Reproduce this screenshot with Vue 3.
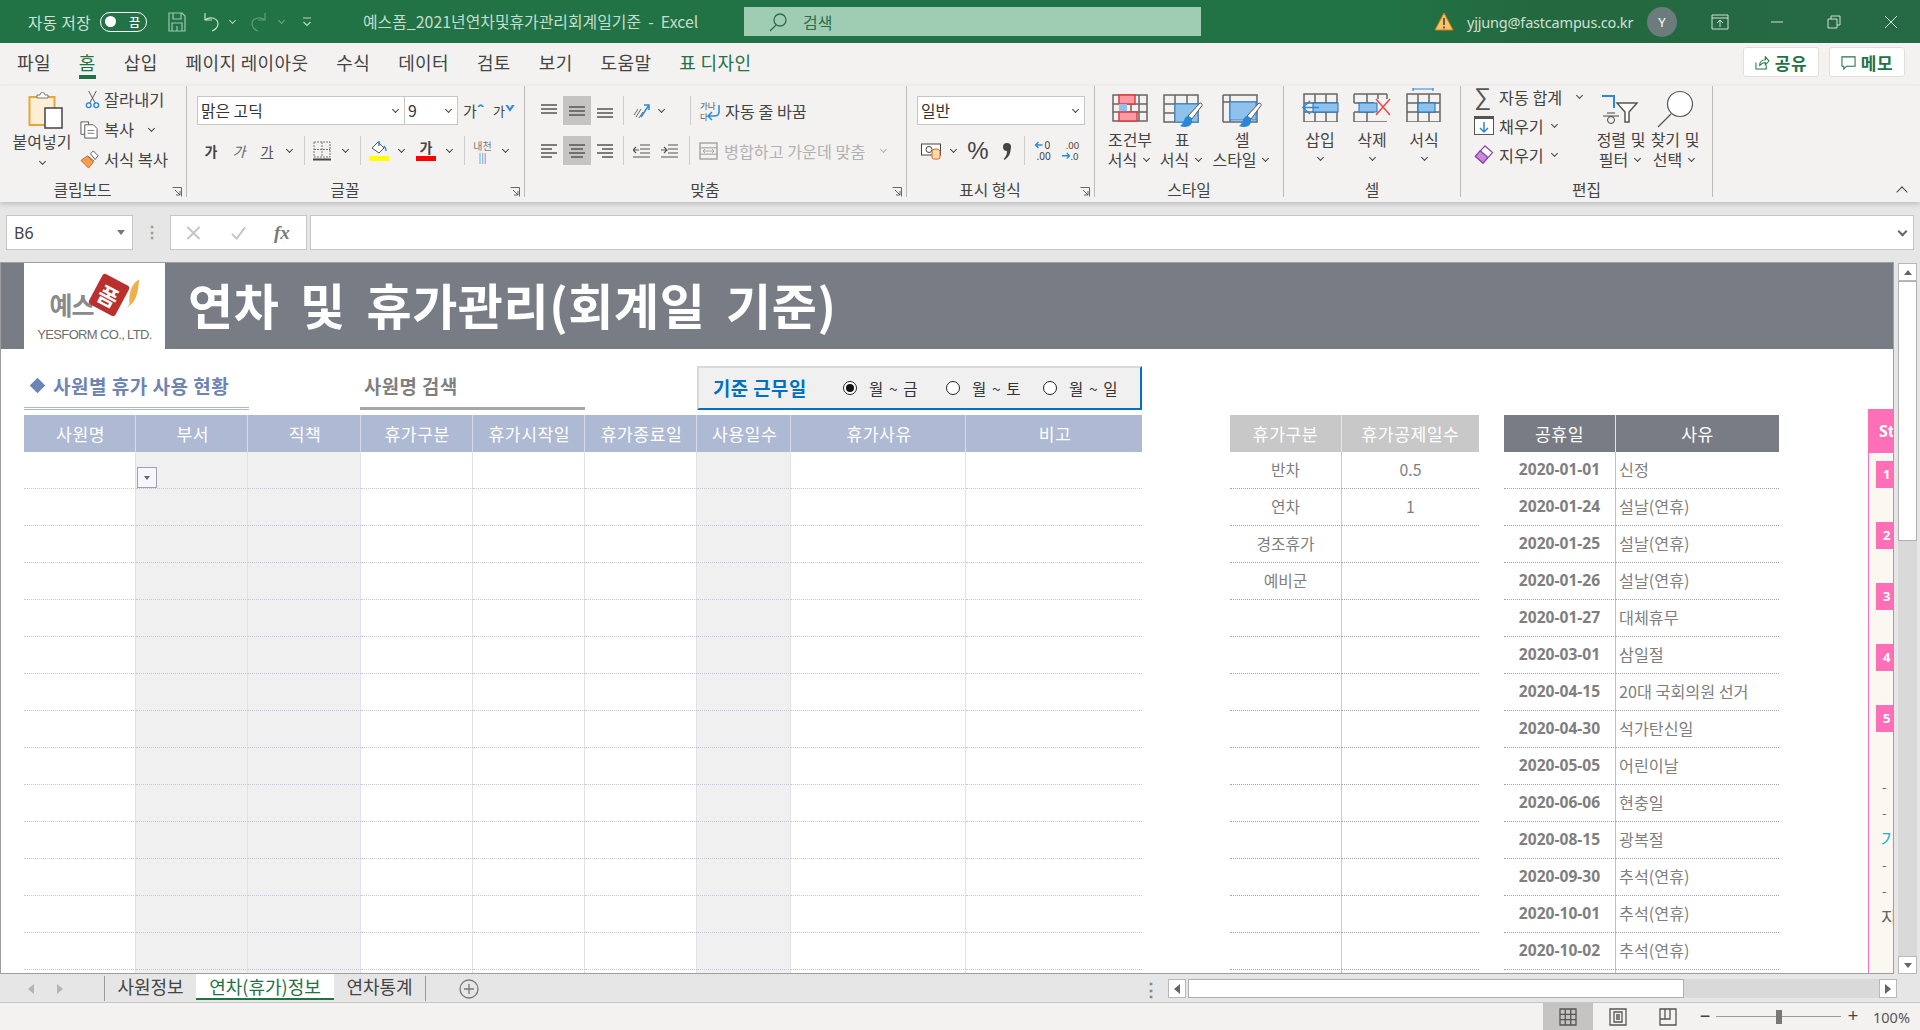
<template>
  <div class="app">
    <!-- title bar -->
    <header class="titlebar">
      <span class="autosave">자동 저장</span>
      <span class="toggle"><i></i><b>끔</b></span>
      <svg class="qa save" viewBox="0 0 18 20"><path d="M1 1h13l3 3v15H1zM5 1v6h8V1M4 19v-8h10v8M9 14v5" /></svg>
      <svg class="qa undo" viewBox="0 0 18 20"><path d="M3 1v7h7M3 8c5-4 13-2 13 4 0 3-3 6-6 7" /></svg>
      <i class="chev light undo-c"></i>
      <svg class="qa redo" viewBox="0 0 18 20"><path d="M15 1v7H8M15 8C10 4 2 6 2 12c0 3 3 6 6 7" /></svg>
      <i class="chev faint redo-c"></i>
      <svg class="qa more" viewBox="0 0 10 10"><path d="M1 1h8M1.5 5L5 8.5 8.5 5" /></svg>
      <span class="doc">예스폼_2021년연차및휴가관리회계일기준 &nbsp;-&nbsp; Excel</span>
      <div class="search">
        <svg viewBox="0 0 20 20"><circle cx="12" cy="8" r="6" /><path d="M8 13l-6 6" /></svg>
        <span>검색</span>
      </div>
      <svg class="warn" viewBox="0 0 20 20"><path d="M10 1L19 18H1z" fill="#f7c46c" stroke="#d97a12" /><path d="M10 6v7M10 14.5v2" stroke="#444" stroke-width="1.6" /></svg>
      <span class="user">yjjung@fastcampus.co.kr</span>
      <span class="avatar">Y</span>
      <svg class="win ribbon-opt" viewBox="0 0 18 16"><path d="M1 1h16v14H1zM1 4h16M9 13V7M6 9l3-3 3 3" /></svg>
      <svg class="win min" viewBox="0 0 14 14"><path d="M1 7h12" /></svg>
      <svg class="win restore" viewBox="0 0 14 14"><path d="M1 4h9v9H1zM4 4V1h9v9h-3" /></svg>
      <svg class="win close" viewBox="0 0 14 14"><path d="M1 1l12 12M13 1L1 13" /></svg>
    </header>

    <!-- ribbon tabs -->
    <nav class="tabs">
      <span v-for="t in ribbonTabs" :key="t" class="tab" :class="{ on: t === '홈' }">{{ t }}</span>
      <span class="tab design">표 디자인</span>
      <div class="actions">
        <button class="act">
          <svg viewBox="0 0 16 16"><path d="M1 8v7h11v-4M5 11c0-4 3-6 6-6V2l4 4.500-4 4V8c-2 0-4 1-6 3z" /></svg>
          <b>공유</b>
        </button>
        <button class="act">
          <svg viewBox="0 0 16 16"><path d="M1 2h14v10H6l-3 3v-3H1z" /></svg>
          <b>메모</b>
        </button>
      </div>
    </nav>

    <!-- ribbon -->
    <section class="ribbon">
      <div class="group g-clip">
        <div class="gbody">
          <div class="paste">
            <svg class="paste-ico" viewBox="0 0 36 38">
              <rect x="1.500" y="6" width="25" height="28" fill="#fcefd6" stroke="#eda33b" stroke-width="2" />
              <path d="M9 7V4h3a2.500 2.500 0 0 1 5 0h3v3z" fill="#fff" stroke="#777" />
              <rect x="17" y="17" width="17" height="20" fill="#fff" stroke="#444" stroke-width="1.500" />
            </svg>
            <span>붙여넣기</span>
            <i class="chev paste-c"></i>
          </div>
          <div class="smalls">
            <div class="sm">
              <svg class="sm-ico" viewBox="0 0 20 20"><path d="M6 1l7 13M14 1L7 14" fill="none" stroke="#555" /><circle cx="6" cy="16" r="2.500" fill="none" stroke="#2b88d8" stroke-width="1.400" /><circle cx="14" cy="16" r="2.500" fill="none" stroke="#2b88d8" stroke-width="1.400" /></svg>
              <span>잘라내기</span>
            </div>
            <div class="sm">
              <svg class="sm-ico" viewBox="0 0 20 20"><path d="M5 15H1V2h8v3" fill="#fff" stroke="#555" /><path d="M5 5h9l4 4v10H5z" fill="#fff" stroke="#555" /><path d="M8 11h7M8 14h7" stroke="#777" /></svg>
              <span>복사</span><i class="chev copy-c"></i>
            </div>
            <div class="sm">
              <svg class="sm-ico" viewBox="0 0 20 20"><path d="M1 11l7-5 6 7-5 6z" fill="#f0a050" stroke="#d8661a" /><path d="M9 7l6 5M11 4l3-3 5 5-3 4z" fill="#fff" stroke="#555" /></svg>
              <span>서식 복사</span>
            </div>
          </div>
        </div>
        <div class="glabel has-launch">클립보드<svg class="launch" viewBox="0 0 10 10"><path d="M.5.5h9v9M3 3l5 5M8 4v4H4" /></svg></div>
      </div>

      <div class="group g-font">
        <div class="gbody col">
          <div class="row1">
            <div class="field font-name">맑은 고딕<i class="chev"></i></div>
            <div class="field font-size">9<i class="chev"></i></div>
            <span class="grow-a">가<em>ˆ</em></span>
            <span class="shrink-a">가<em>ˇ</em></span>
          </div>
          <div class="row2">
            <span class="gl b">가</span><span class="gl it">가</span><span class="gl ul">가</span>
            <i class="chev w16"></i>
            <span class="vsep m78"></span>
            <svg class="borders" viewBox="0 0 18 20"><path d="M1 1h16v15H1zM9 1v15M1 8.500h16" fill="none" stroke="#777" stroke-dasharray="2 1" /><path d="M0 18.500h18" stroke="#444" stroke-width="2" /></svg>
            <i class="chev w28"></i>
            <span class="vsep m18"></span>
            <div class="colorbtn fill">
              <svg viewBox="0 0 20 15"><path d="M3 8l6-6 6 6-5 5z" fill="#fff" stroke="#555" /><path d="M10 1v5M15 6c2 2 2 4 2 5" stroke="#2b88d8" stroke-width="1.500" fill="none" /></svg>
              <i></i>
            </div>
            <i class="chev w24"></i>
            <div class="colorbtn fontc"><span>가</span><i></i></div>
            <i class="chev w26"></i>
            <span class="vsep m27"></span>
            <div class="phonetic"><span>내천</span><small>|||</small></div>
            <i class="chev w25"></i>
          </div>
        </div>
        <div class="glabel has-launch">글꼴<svg class="launch" viewBox="0 0 10 10"><path d="M.5.5h9v9M3 3l5 5M8 4v4H4" /></svg></div>
      </div>

      <div class="group g-align">
        <div class="gbody col">
          <div class="row1 tight">
            <span v-for="(v, i) in vAligns" :key="v" class="alignbtn" :class="{ sel: i === 1 }">
              <svg viewBox="0 0 18 16"><path :d="v" /></svg>
            </span>
            <span class="vsep m40"></span>
            <svg class="orient" viewBox="0 0 18 18"><path d="M2 13l4-6M4 15l5-8M7 16l4-6" stroke="#666" /><path d="M9 15L17 3M12 3h5v5" stroke="#2b88d8" stroke-width="1.500" /></svg>
            <i class="chev w22"></i>
            <span class="vsep m1709"></span>
            <svg class="wrap-ico" viewBox="0 0 21 22"><text x="0" y="9" class="svgt">가나</text><text x="0" y="20" class="svgt">다</text><path d="M19 5v7c0 3-2 4-5 4H9M12 12l-4 4 4 4" fill="none" stroke="#2b88d8" stroke-width="1.500" /></svg>
            <span class="rtext">자동 줄 바꿈</span>
          </div>
          <div class="row2 tight">
            <span v-for="(h, i) in hAligns" :key="h" class="alignbtn" :class="{ sel: i === 1 }">
              <svg viewBox="0 0 18 16"><path :d="h" /></svg>
            </span>
            <span class="vsep m49"></span>
            <svg class="indent" viewBox="0 0 17 16"><path d="M7 2h10M7 6h10M7 10h10M0 14h17M6 7H0M3 4L0 7l3 3" /></svg>
            <svg class="indent ml11" viewBox="0 0 17 16"><path d="M7 2h10M7 6h10M7 10h10M0 14h17M0 7h6M3 4l3 3-3 3" /></svg>
            <span class="vsep m1109"></span>
            <svg class="merge" viewBox="0 0 19 20"><path d="M1 2h17v16H1zM1 7h17M1 13h17" fill="none" stroke="#a6a6a6" stroke-width="1.500" /><rect x="2" y="7.500" width="15" height="5" fill="#f3f2f1" /><path d="M4 10h11M6 8l-2 2 2 2M13 8l2 2-2 2" fill="none" stroke="#a6a6a6" /></svg>
            <span class="rtext off">병합하고 가운데 맞춤</span>
            <i class="chev offc"></i>
          </div>
        </div>
        <div class="glabel has-launch">맞춤<svg class="launch" viewBox="0 0 10 10"><path d="M.5.5h9v9M3 3l5 5M8 4v4H4" /></svg></div>
      </div>

      <div class="group g-num">
        <div class="gbody col">
          <div class="row1"><div class="field num-f">일반<i class="chev"></i></div></div>
          <div class="row2 num-row">
            <svg class="cur" viewBox="0 0 20 18"><rect x=".5" y="2" width="19" height="11" fill="#fff" stroke="#444" /><circle cx="8" cy="7.500" r="3" fill="none" stroke="#444" /><ellipse cx="15" cy="9" rx="4" ry="2" fill="#fbd9a9" stroke="#d8661a" /><path d="M11 9v7c0 1.500 8 1.500 8 0V9" fill="#fbd9a9" stroke="#d8661a" /></svg>
            <i class="chev w24"></i>
            <span class="pct">%</span>
            <svg class="comma" viewBox="0 0 32 26"><circle cx="16" cy="9" r="4" fill="#444" /><path d="M19.500 10c.5 5-1.500 9-6 12l-.8-1c2.500-2.500 3.500-5 3.300-9z" fill="#444" /></svg>
            <span class="vsep m09"></span>
            <svg class="dec" viewBox="0 0 18 22"><path d="M8 5H1M4 2L1 5l3 3" fill="none" stroke="#2b88d8" stroke-width="1.400" /><text x="10" y="9" class="svgd">0</text><text x="2" y="20" class="svgd">.00</text></svg>
            <svg class="dec ml8" viewBox="0 0 20 22"><text x="5" y="9" class="svgd">.00</text><path d="M1 16h8M6 13l3 3-3 3" fill="none" stroke="#2b88d8" stroke-width="1.400" /><text x="10" y="20" class="svgd">.0</text></svg>
          </div>
        </div>
        <div class="glabel has-launch">표시 형식<svg class="launch" viewBox="0 0 10 10"><path d="M.5.5h9v9M3 3l5 5M8 4v4H4" /></svg></div>
      </div>

      <div class="group g-style">
        <div class="gbody bigs">
          <div class="big s1">
            <svg viewBox="0 0 36 28"><path d="M1 1h34v26H1zM1 10h34M1 18h34M10 1v26M19 1v26M27 1v26" fill="none" stroke="#666" stroke-width="1.500" /><rect x="7" y="1" width="16" height="9" fill="#fa9aa5" stroke="#e03c3c" stroke-width="1.500" /><rect x="7" y="10" width="8" height="8" fill="#8ec2ec" /><rect x="7" y="18" width="18" height="9" fill="#fa9aa5" stroke="#e03c3c" stroke-width="1.500" /></svg>
            <span>조건부</span><span>서식<i class="chev inl"></i></span>
          </div>
          <div class="big s2">
            <svg viewBox="0 0 40 34"><path d="M1 1h34v27H1zM1 10h34M1 19h34M12 1v27M24 1v27" fill="none" stroke="#666" stroke-width="1.500" /><rect x="12" y="10" width="23" height="18" fill="#8ec2ec" stroke="#2b88d8" /><path d="M37 9c1.500 0 2.500 1 2 2.500L29 25l-4-3z" fill="#fff" stroke="#555" /><path d="M25 22c-5 1-3 7-8 10 6 2 13 1 12-7z" fill="#2b88d8" /></svg>
            <span>표</span><span>서식<i class="chev inl"></i></span>
          </div>
          <div class="big s3">
            <svg viewBox="0 0 40 34"><path d="M1 1h34v27H1M1 1v27M1 8h34M8 1v27" fill="none" stroke="#666" stroke-width="1.500" /><rect x="8" y="8" width="26" height="18" fill="#8ec2ec" stroke="#2b88d8" /><path d="M37 9c1.500 0 2.500 1 2 2.500L29 25l-4-3z" fill="#fff" stroke="#555" /><path d="M25 22c-5 1-3 7-8 10 6 2 13 1 12-7z" fill="#2b88d8" /></svg>
            <span>셀</span><span>스타일<i class="chev inl"></i></span>
          </div>
        </div>
        <div class="glabel">스타일</div>
      </div>

      <div class="group g-cell">
        <div class="gbody bigs">
          <div class="big c">
            <svg viewBox="0 0 38 34"><path d="M3 6h33v28H3zM3 15h33M3 24h33M14 6v28M25 6v28" fill="none" stroke="#666" stroke-width="1.500" /><rect x="12" y="15" width="25" height="9" fill="#8ec2ec" stroke="#1a6fc0" /><path d="M18 19.500H2M9 13l-7 6.500 7 6.500" fill="none" stroke="#2b88d8" stroke-width="1.500" /></svg>
            <span>삽입</span><i class="chev blk"></i>
          </div>
          <div class="big c">
            <svg viewBox="0 0 38 34"><path d="M1 6h33M1 34h33M1 6v9M1 24v10M34 6v5M14 6v9M14 24v10M25 6v5M1 15h20M1 24h20" fill="none" stroke="#666" stroke-width="1.500" /><rect x="6" y="15" width="18" height="9" fill="#8ec2ec" stroke="#1a6fc0" /><path d="M23 11l14 16M37 11L23 27" stroke="#e8484c" stroke-width="1.500" /></svg>
            <span>삭제</span><i class="chev blk"></i>
          </div>
          <div class="big c">
            <svg viewBox="0 0 38 34"><path d="M8 1h20M8 0v3M28 0v3" stroke="#2b88d8" stroke-width="1.200" /><path d="M2 6h33v28H2zM2 15h33M2 24h33M13 6v28M24 6v28" fill="none" stroke="#666" stroke-width="1.500" /><rect x="13" y="15" width="17" height="9" fill="#8ec2ec" stroke="#1a6fc0" /></svg>
            <span>서식</span><i class="chev blk"></i>
          </div>
        </div>
        <div class="glabel">셀</div>
      </div>

      <div class="group g-edit">
        <div class="gbody">
          <div class="edit-rows">
            <div class="sm e">
              <span class="sigma">∑</span><span>자동 합계</span><i class="chev sum-c"></i>
            </div>
            <div class="sm e">
              <svg class="e-ico" viewBox="0 0 20 19"><rect x=".5" y=".5" width="19" height="18" fill="#fff" stroke="#555" /><path d="M1 1h18v2H1z" fill="#555" /><path d="M10 6v10M6 12l4 4 4-4" fill="none" stroke="#2b88d8" stroke-width="1.500" /></svg>
              <span>채우기</span><i class="chev fill-c"></i>
            </div>
            <div class="sm e">
              <svg class="e-ico" viewBox="0 0 20 20"><path d="M1 12L11 1l8 7-10 11z" fill="#fff" stroke="#8f47a8" stroke-width="1.300" /><path d="M1 12l5-6 8 7-5 6z" fill="#c889dc" stroke="#8f47a8" stroke-width="1.300" /></svg>
              <span>지우기</span><i class="chev fill-c"></i>
            </div>
          </div>
          <div class="big sort">
            <svg viewBox="0 0 38 30"><path d="M1 2h12v12" fill="none" stroke="#2b88d8" stroke-width="2" /><path d="M16 9h20l-8 9v10h-4V18z" fill="#fff" stroke="#555" stroke-width="1.500" /><path d="M6 19h8M2 22h16" stroke="#444" /><circle cx="10" cy="26" r="3.500" fill="none" stroke="#444" /></svg>
            <span>정렬 및</span><span>필터<i class="chev inl"></i></span>
          </div>
          <div class="big find">
            <svg viewBox="0 0 36 38"><circle cx="23" cy="14" r="12.500" fill="#fff" stroke="#555" stroke-width="1.200" /><path d="M14 24L1 37" fill="none" stroke="#555" stroke-width="1.200" /></svg>
            <span>찾기 및</span><span>선택<i class="chev inl"></i></span>
          </div>
        </div>
        <div class="glabel">편집</div>
      </div>
      <i class="chev up collapse"></i>
    </section>

    <!-- formula bar -->
    <section class="formula">
      <div class="namebox">B6<i class="tri"></i></div>
      <span class="dots">⋮</span>
      <div class="fxbox">
        <svg viewBox="0 0 14 14"><path d="M1 1l12 12M13 1L1 13" /></svg>
        <svg viewBox="0 0 16 14"><path d="M1 8l5 5 9-12" /></svg>
        <em>fx</em>
      </div>
      <div class="input"><i class="chev thick"></i></div>
    </section>

    <!-- worksheet -->
    <section class="work">
      <main class="sheet">
        <div class="banner">
          <div class="logo">
            <div class="logo-mark">
              <span class="ye">예스</span>
              <span class="stamp"><b>폼</b></span>
              <svg viewBox="0 0 16 36"><path d="M15 0C6 5 3 17 4 28l-3 6 3-4c7-4 10-14 11-30z" fill="#eeb04a" /></svg>
            </div>
            <span class="co">YESFORM CO., LTD.</span>
          </div>
          <h1>연차 및 휴가관리(회계일 기준)</h1>
        </div>

        <div class="content">
          <div class="left">
            <div class="heads">
              <div class="h-a"><i></i>사원별 휴가 사용 현황</div>
              <div class="h-b">사원명 검색</div>
              <div class="h-c">
                <strong>기준 근무일</strong>
                <label v-for="(w, i) in workdays" :key="w" :class="'r' + i"><span class="radio" :class="{ on: i === 0 }"></span>{{ w }}</label>
              </div>
            </div>
            <div class="grid">
              <div v-for="h in leaveCols" :key="h" class="gh">{{ h }}</div>
              <template v-for="r in 15" :key="r">
                <div v-for="(h, c) in leaveCols" :key="c" class="gc" :class="{ shade: c === 1 || c === 2 || c === 6 }">
                  <span v-if="r === 1 && c === 1" class="dd"><i class="tri"></i></span>
                </div>
              </template>
            </div>
          </div>

          <div class="kinds">
            <div class="kh">휴가구분</div>
            <div class="kh">휴가공제일수</div>
            <template v-for="(k, i) in kinds" :key="i">
              <div class="kc">{{ k[0] }}</div>
              <div class="kc">{{ k[1] }}</div>
            </template>
          </div>

          <div class="hols">
            <div class="hh">공휴일</div>
            <div class="hh">사유</div>
            <template v-for="h in holidays" :key="h[0]">
              <div class="hd">{{ h[0] }}</div>
              <div class="hr">{{ h[1] }}</div>
            </template>
          </div>

          <aside class="steps">
            <div class="s-head">St</div>
            <div class="s-body">
              <span v-for="n in 5" :key="n" class="badge">{{ n }}</span>
              <span class="dash d1">-</span>
              <span class="dash">-</span>
              <span class="s-t blue">기</span>
              <span class="dash">-</span>
              <span class="dash">-</span>
              <span class="s-t">지</span>
            </div>
          </aside>
        </div>
      </main>
      <div class="vbar">
        <div class="vbtn"><i class="tri up"></i></div>
        <div class="vthumb"></div>
        <div class="vtrack"></div>
        <div class="vbtn"><i class="tri"></i></div>
      </div>
    </section>

    <!-- sheet tabs -->
    <section class="sheetbar">
      <i class="arr l"></i>
      <i class="arr r"></i>
      <span class="tsep first"></span>
      <span class="stab">사원정보</span>
      <span class="stab active">연차(휴가)정보</span>
      <span class="stab last">연차통계</span>
      <span class="tsep"></span>
      <svg class="plus" viewBox="0 0 20 20"><circle cx="10" cy="10" r="9" /><path d="M10 5v10M5 10h10" /></svg>
      <span class="tdots">⋮</span>
      <div class="hbar">
        <span class="hbtn"><i class="arr l dark"></i></span>
        <span class="hthumb"></span>
        <span class="htrack"></span>
        <span class="hbtn"><i class="arr r dark"></i></span>
      </div>
    </section>

    <!-- status bar -->
    <footer class="status">
      <span class="view sel">
        <svg viewBox="0 0 18 18"><path d="M1 1h16v16H1zM1 6.300h16M1 11.700h16M6.300 1v16M11.700 1v16" /></svg>
      </span>
      <span class="view">
        <svg viewBox="0 0 18 18"><path d="M1 1h16v16H1zM5 4h8v10H5zM7 7h4M7 9h4M7 11h4" /></svg>
      </span>
      <span class="view">
        <svg viewBox="0 0 18 18"><path d="M1 1h16v16H1zM1 11h10V1M6 1v10" /></svg>
      </span>
      <span class="zm">−</span>
      <span class="slider"><i></i></span>
      <span class="zm">+</span>
      <span class="pc">100%</span>
    </footer>
  </div>
</template>

<script setup>
const ribbonTabs = ['파일', '홈', '삽입', '페이지 레이아웃', '수식', '데이터', '검토', '보기', '도움말']

const vAligns = ['M1 2h16M1 6h16M1 10h16', 'M1 4h16M1 8h16M1 12h16', 'M1 6h16M1 10h16M1 14h16']
const hAligns = ['M1 2h16M1 6h11M1 10h16M1 14h11', 'M1 2h16M3 6h12M1 10h16M3 14h12', 'M1 2h16M6 6h11M1 10h16M6 14h11']

const workdays = ['월 ~ 금', '월 ~ 토', '월 ~ 일']
const leaveCols = ['사원명', '부서', '직책', '휴가구분', '휴가시작일', '휴가종료일', '사용일수', '휴가사유', '비고']

const kinds = [
  ['반차', '0.5'], ['연차', '1'], ['경조휴가', ''], ['예비군', ''],
  ['', ''], ['', ''], ['', ''], ['', ''], ['', ''], ['', ''], ['', ''], ['', ''], ['', ''], ['', ''], ['', '']
]

const holidays = [
  ['2020-01-01', '신정'],
  ['2020-01-24', '설날(연휴)'],
  ['2020-01-25', '설날(연휴)'],
  ['2020-01-26', '설날(연휴)'],
  ['2020-01-27', '대체휴무'],
  ['2020-03-01', '삼일절'],
  ['2020-04-15', '20대 국회의원 선거'],
  ['2020-04-30', '석가탄신일'],
  ['2020-05-05', '어린이날'],
  ['2020-06-06', '현충일'],
  ['2020-08-15', '광복절'],
  ['2020-09-30', '추석(연휴)'],
  ['2020-10-01', '추석(연휴)'],
  ['2020-10-02', '추석(연휴)'],
  ['2020-10-03', '개천절']
]
</script>

<style>
html, body { margin: 0; background: #fff; overflow: hidden; }
</style>

<style scoped>
.app {
  width: 1920px;
  height: 1030px;
  overflow: hidden;
  font-family: "Noto Sans CJK KR", "Noto Sans", sans-serif;
  color: #444;
  font-size: 16px;
  background: #e6e6e6;
}
svg { display: block; flex: none; }

/* small chevrons used all over the ribbon */
.chev {
  display: flex;
  flex: none;
  justify-content: center;
  align-items: center;
  height: 10px;
}
.chev::before {
  content: "";
  width: 4px;
  height: 4px;
  border-right: 1.300px solid #444;
  border-bottom: 1.300px solid #444;
  transform: translateY(-1px) rotate(45deg);
}
.chev.light::before { border-color: #b9d5c6; }
.chev.faint::before { border-color: #6fa58a; }
.tri {
  display: block;
  width: 0;
  height: 0;
  border-left: 4px solid transparent;
  border-right: 4px solid transparent;
  border-top: 5px solid #666;
}
.tri.up { border-top: 0; border-bottom: 5px solid #666; }

/* title bar */
.titlebar {
  height: 43px;
  display: flex;
  align-items: center;
  background: linear-gradient(90deg, #217346 72%, #24683f 80%, #256a45 100%);
  color: #d3e3da;
  font-size: 14px;
}
.autosave { margin-left: 28px; width: 72px; font-size: 15.500px; white-space: nowrap; letter-spacing: .5px; }
.toggle {
  width: 47px;
  height: 20px;
  box-sizing: border-box;
  border: 1px solid #fff;
  border-radius: 10px;
  display: flex;
  align-items: center;
  justify-content: space-between;
  padding: 0 6px 0 4px;
}
.toggle i { width: 11px; height: 11px; background: #fff; border-radius: 50%; }
.toggle b { font-weight: 500; font-size: 12px; color: #fff; }
.qa { fill: none; stroke-width: 1.200; }
.save { width: 18px; height: 20px; margin-left: 21px; stroke: #9ec5b0; }
.undo { width: 18px; height: 20px; margin-left: 16px; stroke: #c9dfd3; }
.undo-c { width: 10px; margin-left: 7px; }
.redo { width: 18px; height: 20px; margin-left: 13px; stroke: #5f9c7d; }
.redo-c { width: 10px; margin-left: 8px; }
.more { width: 10px; height: 10px; margin-left: 16px; stroke: #b9d5c6; }
.doc { margin-left: 51px; width: 381px; white-space: nowrap; font-size: 15.900px; color: #c6dccf; }
.search {
  width: 457px;
  height: 29px;
  background: #9fcdb3;
  display: flex;
  align-items: center;
  color: #2c6e4a;
  font-size: 16px;
}
.search svg { width: 20px; height: 20px; margin-left: 24px; fill: none; stroke: #2c6e4a; stroke-width: 1.300; }
.search span { margin-left: 15px; }
.warn { width: 20px; height: 20px; margin-left: 233px; }
.user { margin-left: 13px; width: 180px; white-space: nowrap; font-family: "Noto Sans", sans-serif; font-size: 14.500px; letter-spacing: -.2px; color: #cfe0d6; }
.avatar {
  width: 30px;
  height: 30px;
  margin-left: 0;
  border-radius: 50%;
  background: #6c7c7c;
  color: #fff;
  font: 13px "Noto Sans", sans-serif;
  display: flex;
  align-items: center;
  justify-content: center;
}
.win { fill: none; stroke: #cfe0d6; stroke-width: 1; }
.ribbon-opt { width: 18px; height: 16px; margin-left: 34px; }
.min { width: 14px; height: 14px; margin-left: 41px; }
.restore { width: 14px; height: 14px; margin-left: 43px; }
.close { width: 14px; height: 14px; margin-left: 43px; }

/* ribbon tabs */
.tabs {
  height: 43px;
  box-sizing: border-box;
  padding: 0 0 5px 17px;
  background: #f3f2f1;
  display: flex;
  align-items: center;
  gap: 28px;
  font-size: 18px;
  letter-spacing: .35px;
  color: #444;
  position: relative;
}
.tab { position: relative; white-space: nowrap; }
.tab.on { color: #217346; }
.tab.on::after {
  content: "";
  position: absolute;
  left: 0;
  right: 0;
  top: 26px;
  height: 4px;
  background: #217346;
}
.tab.design { color: #217346; }
.actions { margin-left: auto; margin-right: 15px; display: flex; gap: 10px; }
.act {
  width: 76px;
  height: 30px;
  background: #fff;
  border: 1px solid #e1dfdd;
  border-radius: 3px;
  color: #217346;
  font-family: inherit;
  font-size: 17px;
  letter-spacing: .5px;
  display: flex;
  align-items: center;
  justify-content: center;
  gap: 5px;
  padding: 0;
}
.act svg { width: 15px; height: 15px; fill: none; stroke: #217346; stroke-width: 1.100; }
.act b { font-weight: 700; }

/* ribbon */
.ribbon {
  height: 116px;
  background: #f3f2f1;
  display: flex;
  align-items: flex-start;
  box-shadow: 0 2px 5px rgba(0, 0, 0, .18);
  position: relative;
  font-size: 16px;
}
.group {
  height: 111px;
  box-sizing: border-box;
  border-right: 1px solid #bdbbb9;
  display: flex;
  flex-direction: column;
  flex: none;
}
.gbody { flex: 1; display: flex; min-height: 0; }
.gbody.col { flex-direction: column; }
.glabel {
  height: 22px;
  margin-bottom: -3px;
  display: flex;
  align-items: center;
  justify-content: center;
  position: relative;
  font-size: 15.800px;
  white-space: nowrap;
}
.glabel.has-launch { padding-right: 21px; }
.g-font .glabel, .g-align .glabel, .g-num .glabel { padding-right: 31px; }
.launch {
  position: absolute;
  right: 4px;
  top: 9px;
  width: 10px;
  height: 10px;
  fill: none;
  stroke: #666;
  stroke-width: 1;
}
.g-clip { width: 187px; }
.g-font { width: 338px; padding-left: 10px; }
.g-align { width: 382px; padding-left: 10px; }
.g-num { width: 188px; padding-left: 10px; }
.g-style { width: 189px; }
.g-cell { width: 177px; }
.g-edit { width: 252px; }

.paste {
  width: 84px;
  flex: none;
  display: flex;
  flex-direction: column;
  align-items: center;
  padding-top: 5px;
  white-space: nowrap;
  line-height: 20px;
}
.paste-ico { width: 36px; height: 38px; margin: 0 0 2px 7px; }
.paste-c { margin-top: 6px; }
.smalls { margin-top: -2px; }
.smalls .sm { font-size: 16.400px; }
.sm { height: 30px; display: flex; align-items: center; white-space: nowrap; }
.sm-ico { width: 19px; height: 19px; margin-right: 5px; margin-left: -4px; }
.smalls .sm:first-child .sm-ico { margin-left: -1px; margin-right: 2px; }
.copy-c { width: 10px; margin-left: 12px; }

.row1 { height: 29px; margin-top: 10px; display: flex; align-items: center; }
.row2 { height: 29px; margin-top: 11px; display: flex; align-items: center; }
.field {
  height: 29px;
  box-sizing: border-box;
  background: #fff;
  border: 1px solid #c8c6c4;
  display: flex;
  align-items: center;
  justify-content: space-between;
  padding: 0 3px;
  white-space: nowrap;
  font-size: 15.800px;
  line-height: 25px;
  color: #333;
  flex: none;
}
.field .chev { width: 12px; }
.font-name { width: 208px; }
.font-size { width: 54px; margin-left: -1px; }
.grow-a, .shrink-a { position: relative; font-size: 15px; line-height: 1; display: flex; }
.grow-a { margin-left: 5px; width: 30px; }
.shrink-a { width: 20px; font-size: 13px; }
.grow-a em, .shrink-a em { font-style: normal; color: #2b88d8; font-size: 16px; font-weight: 700; line-height: 14px; margin-left: 0; }
.gl { width: 28px; text-align: center; font-size: 14px; flex: none; color: #444; }
.gl.b { font-weight: 700; }
.gl.it { font-style: italic; color: #666; }
.gl.ul { text-decoration: underline; color: #555; }
.w16 { width: 16px; } .w22 { width: 22px; } .w24 { width: 24px; } .w25 { width: 25px; } .w26 { width: 26px; } .w28 { width: 28px; }
.vsep { width: 1px; height: 29px; background: #cfcdcb; flex: none; }
.m78 { margin: 0 8px 0 7px; }
.m18 { margin: 0 8px 0 1px; }
.m27 { margin: 0 7px 0 2px; }
.m40 { margin: 0 8px 0 4px; }
.m1709 { margin: 0 9px 0 18px; }
.m49 { margin: 0 9px 0 4px; }
.m1109 { margin: 0 9px 0 11px; }
.m09 { margin: 0 9px 0 1px; }
.borders { width: 18px; height: 20px; }
.colorbtn { width: 20px; display: flex; flex-direction: column; align-items: center; flex: none; }
.colorbtn svg { width: 20px; height: 15px; }
.colorbtn i { display: block; width: 20px; height: 5px; margin-top: 1px; }
.colorbtn.fill i { background: #ffff00; }
.colorbtn.fontc { margin-left: 3px; }
.colorbtn.fontc span { font-size: 14px; font-weight: 700; line-height: 15px; }
.colorbtn.fontc i { background: #ff0000; }
.phonetic { width: 21px; margin-left: 0; display: flex; flex-direction: column; align-items: center; font-size: 10px; line-height: 11px; color: #777; flex: none; white-space: nowrap; }
.phonetic small { color: #2b88d8; font-size: 10px; }

.row1.tight, .row2.tight { flex: none; }
.alignbtn { width: 28px; height: 29px; display: flex; align-items: center; justify-content: center; flex: none; }
.alignbtn.sel { background: #c5c4c2; }
.alignbtn svg { width: 18px; height: 16px; fill: none; stroke: #555; stroke-width: 1.300; }
.orient { width: 18px; height: 18px; fill: none; }
.wrap-ico { width: 21px; height: 22px; margin-right: 4px; }
.svgt { font-size: 8.500px; fill: #555; }
.rtext { white-space: nowrap; font-size: 16.200px; }
.rtext.off { color: #b1b1b1; margin-left: 6px; }
.indent { width: 17px; height: 16px; fill: none; stroke: #555; stroke-width: 1.200; }
.ml11 { margin-left: 11px; }
.ml8 { margin-left: 8px; }
.merge { width: 19px; height: 20px; }
.offc { width: 10px; margin-left: 13px; }
.offc::before { border-color: #b1b1b1; }

.num-f { width: 168px; }
.num-row { padding-left: 4px; }
.cur { width: 20px; height: 18px; }
.pct { width: 26px; text-align: center; font: 24px "Liberation Sans", sans-serif; flex: none; }
.comma { width: 32px; height: 26px; }
.dec { width: 19px; height: 22px; }
.svgd { font: 10px "Noto Sans", sans-serif; fill: #444; }

.bigs { align-items: flex-start; }
.big {
  display: flex;
  flex-direction: column;
  align-items: center;
  flex: none;
  line-height: 20px;
  white-space: nowrap;
  padding-top: 8px;
  box-sizing: border-box;
}
.big svg { height: 28px; margin-bottom: 7px; }
.big span { display: flex; align-items: center; }
.chev.inl { width: 12px; margin-left: 3px; }
.g-style .bigs { padding-left: 5px; }
.s1 { width: 60px; } .s2 { width: 44px; } .s3 { width: 76px; }
.s1 svg { width: 36px; }
.s2 svg { width: 40px; height: 34px; margin-bottom: 1px; margin-left: 2px; }
.s3 svg { width: 40px; height: 34px; margin-bottom: 1px; }
.g-cell .bigs { padding-left: 10px; }
.big.c { width: 52px; padding-top: 2px; }
.big.c svg { width: 38px; height: 34px; margin-bottom: 7px; }
.chev.blk { margin-top: 4px; }

.edit-rows { width: 121px; margin-left: 13px; margin-top: -4px; flex: none; }
.sm.e { height: 29px; font-size: 16.200px; }
.sigma { width: 25px; font: 24px "Liberation Sans", sans-serif; color: #555; flex: none; line-height: 20px; }
.e-ico { width: 20px; height: 19px; margin-right: 5px; }
.sum-c { width: 10px; margin-left: 12px; }
.fill-c { width: 10px; margin-left: 6px; }
.sort { width: 52px; word-spacing: 1px; }
.sort svg { width: 38px; height: 30px; margin: 0 2px 5px 0; }
.find { width: 56px; padding-top: 4px; word-spacing: 1px; }
.find svg { width: 36px; height: 38px; margin-bottom: 1px; }
.collapse { position: absolute; right: 11px; bottom: 8px; width: 14px; }
.chev.up::before { width: 7px; height: 7px; transform: translateY(3px) rotate(225deg); }

/* formula bar */
.formula {
  height: 60px;
  box-sizing: border-box;
  padding-top: 13px;
  display: flex;
  align-items: flex-start;
}
.namebox {
  width: 127px;
  height: 35px;
  margin-left: 6px;
  box-sizing: border-box;
  background: #fff;
  border: 1px solid #c8c6c4;
  display: flex;
  align-items: center;
  justify-content: space-between;
  padding: 0 7px;
  font: 16px "Noto Sans", sans-serif;
}
.namebox .tri { border-top-color: #777; }
.dots { width: 37px; height: 35px; text-align: center; line-height: 33px; color: #9a9a9a; font-weight: 700; }
.fxbox {
  width: 137px;
  height: 35px;
  box-sizing: border-box;
  background: #fff;
  border: 1px solid #c8c6c4;
  display: flex;
  align-items: center;
  padding-left: 15px;
  gap: 30px;
}
.fxbox svg { width: 15px; height: 14px; fill: none; stroke: #c4c4c4; stroke-width: 2; }
.fxbox em { font: italic 700 19px "Liberation Serif", serif; color: #7a7a7a; margin-left: -2px; }
.input {
  width: 1604px;
  height: 35px;
  margin-left: 3px;
  box-sizing: border-box;
  background: #fff;
  border: 1px solid #c8c6c4;
  display: flex;
  align-items: center;
  justify-content: flex-end;
  padding-right: 5px;
}
.chev.thick { width: 12px; }
.chev.thick::before { width: 5px; height: 5px; border-width: 2px; border-color: #666; }

/* worksheet */
.work { height: 712px; display: flex; }
.sheet {
  width: 1894px;
  box-sizing: border-box;
  height: 712px;
  background: #fff;
  border: 1px solid #9e9e9e;
  overflow: hidden;
  flex: none;
}
.banner {
  height: 86px;
  background: #787c85;
  display: flex;
  padding-left: 23px;
  flex: none;
}
.logo {
  width: 141px;
  height: 86px;
  background: #fff;
  display: flex;
  flex-direction: column;
  align-items: center;
  flex: none;
}
.logo-mark {
  display: flex;
  align-items: center;
  height: 50px;
  margin-top: 9px;
  position: relative;
}
.ye { font-size: 25px; font-weight: 700; color: #8a8a8a; letter-spacing: -1px; margin-top: 14px; white-space: nowrap; }
.stamp {
  width: 30px;
  height: 34px;
  background: #b9302f;
  border-radius: 3px;
  transform: rotate(28deg);
  display: flex;
  align-items: center;
  justify-content: center;
  margin: 0 0 5px 0;
  color: #fff;
  font-size: 22px;
  flex: none;
}
.stamp b { font-weight: 700; }
.logo-mark svg { width: 14px; height: 36px; margin: 0 0 4px 2px; }
.co {
  font: 13px "Liberation Sans", sans-serif;
  letter-spacing: -.65px;
  color: #6e6e6e;
  margin-top: 5px;
  white-space: nowrap;
}
.banner h1 {
  margin: 0 0 0 23px;
  font-size: 49px;
  font-weight: 700;
  line-height: 81px;
  color: #fff;
  white-space: nowrap;
  letter-spacing: .6px;
  word-spacing: 9px;
}

.content {
  display: flex;
  padding-left: 23px;
  align-items: flex-start;
}
.left { width: 1117px; flex: none; }
.heads { height: 66px; display: flex; align-items: flex-end; }
.h-a, .h-b {
  width: 225px;
  box-sizing: border-box;
  height: 45px;
  margin-bottom: 5px;
  display: flex;
  align-items: center;
  font-size: 19px;
  font-weight: 700;
  padding-bottom: 2px;
  letter-spacing: .5px;
  white-space: nowrap;
  flex: none;
}
.h-a { color: #6d84b4; border-bottom: 3px double #aeb6cc; padding-left: 4px; }
.h-a i {
  width: 11px;
  height: 11px;
  background: #6d84b4;
  transform: rotate(45deg);
  margin: 0 10px 0 4px;
  flex: none;
}
.h-b { margin-left: 111px; color: #7f7f7f; border-bottom: 3px solid #a6a6a6; padding-left: 4px; font-size: 18.800px; }
.h-c {
  width: 445px;
  height: 44px;
  margin-left: 112px;
  margin-bottom: 5px;
  box-sizing: border-box;
  background: #f0f0f0;
  border-top: 2px solid #d9d9d9;
  border-left: 2px solid #d9d9d9;
  border-right: 2px solid #0070c0;
  border-bottom: 2px solid #0070c0;
  display: flex;
  align-items: center;
  padding-left: 14px;
  flex: none;
}
.h-c strong { font-size: 18.800px; font-weight: 700; color: #0070c0; width: 130px; letter-spacing: .5px; flex: none; white-space: nowrap; line-height: 24px; }
.h-c label { display: flex; align-items: center; font-size: 15.500px; color: #333; white-space: nowrap; letter-spacing: .6px; flex: none; word-spacing: 1px; }
.r0 { width: 103px; }
.r1 { width: 97px; }
.h-c label .radio {
  width: 14px;
  height: 14px;
  box-sizing: border-box;
  border: 1.400px solid #222;
  border-radius: 50%;
  background: #fff;
  margin-right: 12px;
  position: relative;
  flex: none;
}
.radio.on::after {
  content: "";
  position: absolute;
  inset: 2px;
  background: #111;
  border-radius: 50%;
}
.grid {
  display: grid;
  grid-template-columns: repeat(6, 112.200px) 94px 175px 175.800px;
  grid-auto-rows: 37px;
}
.gh {
  background: #aeb9d4;
  color: #fff;
  border-right: 1px solid #d5dbe8;
  display: flex;
  align-items: center;
  justify-content: center;
  padding-left: 2px;
  font-size: 17.200px;
  letter-spacing: .5px;
  white-space: nowrap;
}
.gh:nth-child(9) { border-right: 0; }
.gc {
  box-sizing: border-box;
  border-bottom: 1px dotted #c6c6dd;
  border-right: 1px solid #dfe1ef;
  position: relative;
}
.gc.shade { background: #f0f0f0; }
.gc:nth-child(9n) { border-right: 0; }
.dd {
  position: absolute;
  left: 1px;
  top: 15px;
  width: 20px;
  height: 21px;
  box-sizing: border-box;
  background: #f7f7fb;
  border: 1px solid #9aa2b3;
  display: flex;
  align-items: center;
  justify-content: center;
}
.dd .tri { border-left-width: 3.500px; border-right-width: 3.500px; border-top-width: 4px; }

.kinds, .hols {
  margin-top: 66px;
  display: grid;
  grid-auto-rows: 37px;
  flex: none;
}
.kinds { grid-template-columns: 112px 137px; margin-left: 89px; }
.kh, .hh {
  display: flex;
  align-items: center;
  justify-content: center;
  color: #fff;
  font-size: 17.200px;
  letter-spacing: .5px;
  white-space: nowrap;
}
.kh { background: #c8c8c8; }
.kh:nth-child(1), .hh:nth-child(1) { border-right: 1px solid #e4e4e4; }
.kc {
  box-sizing: border-box;
  border-bottom: 1px dotted #a6a6a6;
  display: flex;
  align-items: center;
  justify-content: center;
  font-size: 15.800px;
  color: #7f7f7f;
  padding-bottom: 2px;
}
.kc:nth-child(odd) { border-right: 1px solid #c8c8c8; }
.hols { grid-template-columns: 112px 163px; margin-left: 25px; }
.hh { background: #787c85; }
.hd {
  box-sizing: border-box;
  border-bottom: 1px dotted #a6a6a6;
  border-right: 1px solid #bfbfbf;
  display: flex;
  align-items: center;
  justify-content: center;
  font: 700 15.600px "Noto Sans", sans-serif;
  color: #7f7f7f;
  padding-bottom: 2px;
}
.hr {
  box-sizing: border-box;
  border-bottom: 1px dotted #a6a6a6;
  display: flex;
  align-items: center;
  padding: 0 0 2px 3px;
  font-size: 16.200px;
  color: #7f7f7f;
  white-space: nowrap;
}
.steps { margin-left: 89px; margin-top: 60px; width: 60px; flex: none; }
.s-head {
  height: 44px;
  background: #ff6fb7;
  color: #fff;
  font: 700 16px "Noto Sans", sans-serif;
  display: flex;
  align-items: center;
  padding-left: 11px;
}
.s-body {
  height: 560px;
  background: #faf8f0;
  border-left: 1px solid #ff6fb7;
  display: flex;
  flex-direction: column;
  align-items: flex-start;
  padding-left: 7px;
  padding-top: 8px;
}
.badge {
  width: 30px;
  height: 27px;
  margin-bottom: 34px;
  background: #ff6fb7;
  color: #fff;
  font: 700 13px/27px "Noto Sans", sans-serif;
  padding-left: 7px;
  box-sizing: border-box;
  flex: none;
}
.dash { height: 26px; line-height: 26px; font-size: 13px; color: #666; padding-left: 6px; }
.d1 { margin-top: 8px; }
.s-t { height: 26px; line-height: 26px; font-size: 17px; color: #666; padding-left: 5px; }
.s-t.blue { color: #1aaee8; }

.vbar {
  width: 26px;
  height: 712px;
  box-sizing: border-box;
  padding: 1px 3px 0 4px;
  display: flex;
  flex-direction: column;
  flex: none;
}
.vbtn {
  height: 18px;
  box-sizing: border-box;
  background: #fff;
  border: 1px solid #b8b8b8;
  display: flex;
  align-items: center;
  justify-content: center;
  flex: none;
}
.vthumb { height: 260px; background: #fff; border: 1px solid #b0b0b0; box-sizing: border-box; flex: none; }
.vtrack { flex: 1; background: #d9d9d9; }

/* sheet tabs */
.sheetbar {
  height: 29px;
  box-sizing: border-box;
  border-bottom: 1px solid #c8c6c4;
  display: flex;
  align-items: flex-start;
  position: relative;
  background: #e6e6e6;
  font-size: 18px;
}
.arr {
  width: 0;
  height: 0;
  border-top: 5px solid transparent;
  border-bottom: 5px solid transparent;
  flex: none;
  margin-top: 10px;
}
.arr.l { border-right: 6px solid #b4b4b4; margin-left: 28px; }
.arr.r { border-left: 6px solid #b4b4b4; margin-left: 23px; }
.tsep { width: 1px; height: 25px; background: #9a9a9a; margin-top: 2px; flex: none; }
.tsep.first { margin-left: 41px; }
.stab {
  height: 24px;
  display: flex;
  align-items: center;
  justify-content: center;
  white-space: nowrap;
  color: #444;
  flex: none;
  width: 91px;
}
.stab.active {
  width: 138px;
  background: #fff;
  color: #217346;
  border-bottom: 2px solid #217346;
}
.plus { width: 20px; height: 20px; margin: 5px 0 0 33px; fill: none; stroke: #777; stroke-width: 1.300; }
.tdots { margin-left: 663px; color: #888; font-weight: 700; line-height: 28px; width: 8px; }
.hbar {
  width: 729px;
  height: 19px;
  margin: 5px 0 0 18px;
  display: flex;
  flex: none;
}
.hbtn {
  width: 18px;
  height: 19px;
  box-sizing: border-box;
  background: #fff;
  border: 1px solid #b8b8b8;
  display: flex;
  align-items: center;
  justify-content: center;
  flex: none;
}
.hbtn .arr { margin: 0; }
.arr.dark.l { border-right-color: #666; }
.arr.dark.r { border-left-color: #666; }
.hthumb { width: 496px; background: #fff; border: 1px solid #b0b0b0; box-sizing: border-box; flex: none; margin-left: 2px; }
.htrack { flex: 1; background: #d9d9d9; }

/* status bar */
.status {
  height: 27px;
  background: #f3f2f1;
  display: flex;
  align-items: center;
  padding-left: 1543px;
}
.view { width: 50px; height: 27px; display: flex; align-items: center; justify-content: center; flex: none; }
.view.sel { background: #c5c4c2; }
.view svg { width: 18px; height: 18px; fill: none; stroke: #555; stroke-width: 1.300; }
.zm { width: 12px; margin-left: 6px; text-align: center; font: 18px "Liberation Sans", sans-serif; color: #444; flex: none; }
.slider { width: 125px; height: 1px; background: #9a9a9a; margin-left: 5px; display: flex; align-items: center; justify-content: center; flex: none; }
.slider i { display: block; width: 6px; height: 14px; background: #777; flex: none; }
.pc { margin-left: 14px; font: 14.500px "Noto Sans", sans-serif; color: #555; white-space: nowrap; }
</style>
